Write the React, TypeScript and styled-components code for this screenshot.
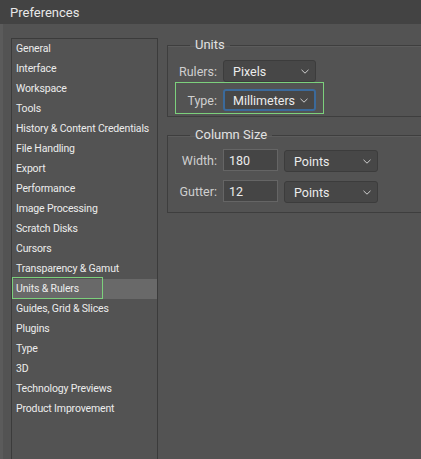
import * as React from "react";
import styled, { createGlobalStyle } from "styled-components";

const GlobalStyle = createGlobalStyle`
  html, body {
    margin: 0;
    padding: 0;
    background: #535353;
    overflow: hidden;
  }
  body {
    font-family: Roboto, "Noto Sans", sans-serif;
    color: #e4e4e4;
  }
`;

const Window = styled.div`
  width: 500px;
  height: 459px;
  display: flex;
  flex-direction: column;
  overflow: hidden;
`;

const TitleBar = styled.div`
  height: 24px;
  flex: none;
  background: #434343;
  display: flex;
  align-items: center;
  padding-left: 10px;
  font-size: 13px;
  color: #e8e8e8;
`;

const Body = styled.div`
  flex: 1;
  display: flex;
  align-items: flex-start;
  gap: 9px;
  padding: 14px 0 0 8px;
  border-left: 3px solid #5b5b5b;
  min-height: 0;
`;

const CategoryList = styled.ul`
  list-style: none;
  margin: 0;
  padding: 0;
  width: 145px;
  height: 440px;
  flex: none;
  border: 1px solid #3b3b3b;
  font-size: 10.5px;
  letter-spacing: -0.15px;
`;

const Category = styled.li<{ selected?: boolean }>`
  position: relative;
  height: 20px;
  line-height: 20px;
  padding-left: 4px;
  white-space: nowrap;
  color: #ececec;
  background: ${({ selected }) => (selected ? "#696969" : "transparent")};

  ${({ selected }) =>
    selected &&
    `
    &::after {
      content: "";
      position: absolute;
      left: 0;
      top: -2px;
      width: 89px;
      height: 20px;
      border: 1px solid #7cd07c;
    }
  `}
`;

const Panel = styled.div`
  flex: 1;
  display: flex;
  flex-direction: column;
  gap: 9px;
  margin-top: -2px;
`;

const Group = styled.fieldset<{ bottom: number }>`
  margin: 0;
  padding: 0 0 ${({ bottom }) => bottom}px 7px;
  border: 1px solid #3e3e3e;
  border-right: none;
  box-shadow: inset 0 1px 0 #5c5c5c;
  display: flex;
  flex-direction: column;
`;

const Legend = styled.legend`
  margin-left: 15px;
  padding: 0 5px;
  font-size: 13px;
  line-height: 18px;
  color: #e2e2e2;
`;

const Row = styled.div<{ highlight?: boolean; gapTop?: number }>`
  display: flex;
  align-items: center;
  gap: 6px;
  width: max-content;
  border: 1px solid ${({ highlight }) => (highlight ? "#7cd07c" : "transparent")};
  padding: ${({ highlight }) => (highlight ? "6px 7px 2px 0" : "0 7px 0 0")};
  margin-top: ${({ gapTop }) => gapTop ?? 0}px;
`;

const Label = styled.span`
  width: 41px;
  text-align: right;
  font-size: 12.5px;
  color: #cfcfcf;
`;

const Select = styled.div<{ width: number; focused?: boolean; drop?: number }>`
  box-sizing: border-box;
  width: ${({ width }) => width}px;
  height: 22px;
  margin-top: ${({ drop }) => (drop ?? 0) * 2}px;
  display: flex;
  align-items: center;
  justify-content: space-between;
  padding: 0 6px 0 ${({ focused }) => (focused ? 8 : 9)}px;
  background: #474747;
  border: ${({ focused }) => (focused ? "2px solid #3b6a9b" : "1px solid #3c3c3c")};
  border-radius: 3px;
  font-size: 12.5px;
  color: #ececec;
`;

const NumberInput = styled.div`
  box-sizing: border-box;
  width: 55px;
  height: 22px;
  display: flex;
  align-items: center;
  padding-left: 5px;
  background: #454545;
  border: 1px solid #656565;
  font-size: 12.5px;
  color: #ececec;
`;

const Chevron = () => (
  <svg width="8" height="5" viewBox="0 0 8 5">
    <polyline points="0.5,0.8 4,4.2 7.5,0.8" fill="none" stroke="#cfcfcf" strokeWidth="1" />
  </svg>
);

const categories = [
  "General",
  "Interface",
  "Workspace",
  "Tools",
  "History & Content Credentials",
  "File Handling",
  "Export",
  "Performance",
  "Image Processing",
  "Scratch Disks",
  "Cursors",
  "Transparency & Gamut",
  "Units & Rulers",
  "Guides, Grid & Slices",
  "Plugins",
  "Type",
  "3D",
  "Technology Previews",
  "Product Improvement",
];

export default function App() {
  return (
    <>
      <GlobalStyle />
      <Window>
        <TitleBar>Preferences</TitleBar>
        <Body>
          <CategoryList>
            {categories.map(c => (
              <Category key={c} selected={c === "Units & Rulers"}>
                {c}
              </Category>
            ))}
          </CategoryList>
          <Panel>
            <Group bottom={2}>
              <Legend>Units</Legend>
              <Row gapTop={5}>
                <Label>Rulers:</Label>
                <Select width={93}>
                  Pixels
                  <Chevron />
                </Select>
              </Row>
              <Row highlight gapTop={-1}>
                <Label>Type:</Label>
                <Select width={93} focused>
                  Millimeters
                  <Chevron />
                </Select>
              </Row>
            </Group>
            <Group bottom={8}>
              <Legend>Column Size</Legend>
              <Row gapTop={3}>
                <Label>Width:</Label>
                <NumberInput>180</NumberInput>
                <Select width={94} drop={1}>
                  Points
                  <Chevron />
                </Select>
              </Row>
              <Row gapTop={5}>
                <Label>Gutter:</Label>
                <NumberInput>12</NumberInput>
                <Select width={94} drop={1}>
                  Points
                  <Chevron />
                </Select>
              </Row>
            </Group>
          </Panel>
        </Body>
      </Window>
    </>
  );
}
